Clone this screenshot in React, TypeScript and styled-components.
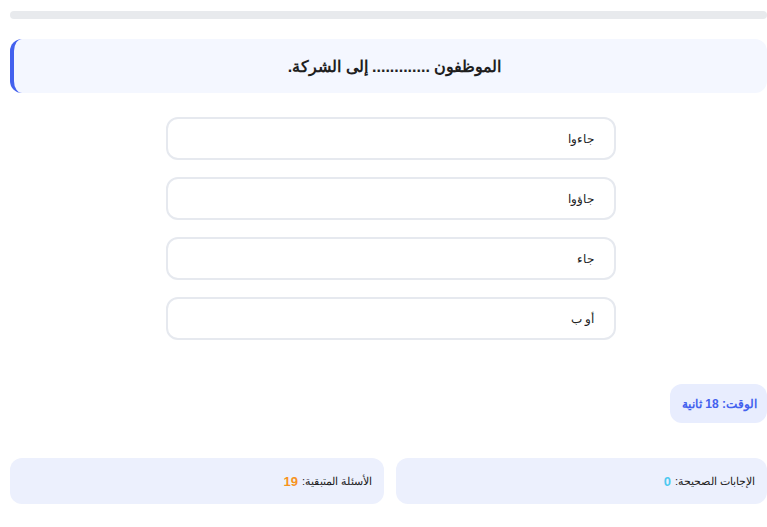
import styled, { createGlobalStyle } from "styled-components";

const GlobalStyle = createGlobalStyle`
  body {
    margin: 0;
    background: #ffffff;
    font-family: "Liberation Sans", Arial, sans-serif;
    overflow: hidden;
  }
`;

const Page = styled.div`
  direction: rtl;
  width: 757px;
  margin-left: 10px;
  padding-top: 11px;
  display: flex;
  flex-direction: column;
`;

const Progress = styled.div`
  height: 8px;
  border-radius: 4px;
  background: #e8eaed;
  overflow: hidden;
`;

const Question = styled.div`
  margin-top: 20px;
  height: 54px;
  box-sizing: border-box;
  background: #f4f7ff;
  border-left: 4px solid #4361ee;
  border-radius: 12px;
  display: flex;
  align-items: center;
  justify-content: center;
  padding-left: 8px;
  font-size: 16px;
  font-weight: bold;
  color: #1f1f1f;
`;

const Options = styled.div`
  margin: 24px 0 0 156px;
  width: 450px;
  display: flex;
  flex-direction: column;
  gap: 17px;
  align-self: flex-end;
`;

const Option = styled.button`
  direction: rtl;
  height: 43px;
  border: 2px solid #e6e9ef;
  border-radius: 12px;
  background: #ffffff;
  text-align: right;
  padding: 0 20px;
  font-family: inherit;
  font-size: 12px;
  color: #222;
`;

const TimerRow = styled.div`
  margin-top: 44px;
  display: flex;
  justify-content: flex-start;
`;

const Timer = styled.div`
  height: 39px;
  padding: 0 10px 0 12px;
  border-radius: 12px;
  background: #e8edfe;
  color: #4361ee;
  font-size: 12px;
  font-weight: bold;
  display: flex;
  align-items: center;
`;

const Stats = styled.div`
  margin-top: 35px;
  display: grid;
  grid-template-columns: 371px 374px;
  gap: 12px;
`;

const Stat = styled.div`
  height: 46px;
  padding: 0 12px;
  border-radius: 12px;
  background: #ecf0fd;
  font-size: 11px;
  color: #222;
  display: flex;
  align-items: center;
`;

const Num = styled.span<{ $color: string }>`
  color: ${(p) => p.$color};
  font-weight: bold;
  font-size: 13px;
  margin-right: 4px;
`;

const options = ["جاءوا", "جاؤوا", "جاء", "أو ب"];

export default function App() {
  return (
    <>
      <GlobalStyle />
      <Page>
        <Progress />
        <Question>الموظفون ............. إلى الشركة.</Question>
        <Options>
          {options.map((o) => (
            <Option key={o}>{o}</Option>
          ))}
        </Options>
        <TimerRow>
          <Timer>الوقت: 18 ثانية</Timer>
        </TimerRow>
        <Stats>
          <Stat>
            الإجابات الصحيحة:<Num $color="#4cc9f0">0</Num>
          </Stat>
          <Stat>
            الأسئلة المتبقية:<Num $color="#f7931e">19</Num>
          </Stat>
        </Stats>
      </Page>
    </>
  );
}
